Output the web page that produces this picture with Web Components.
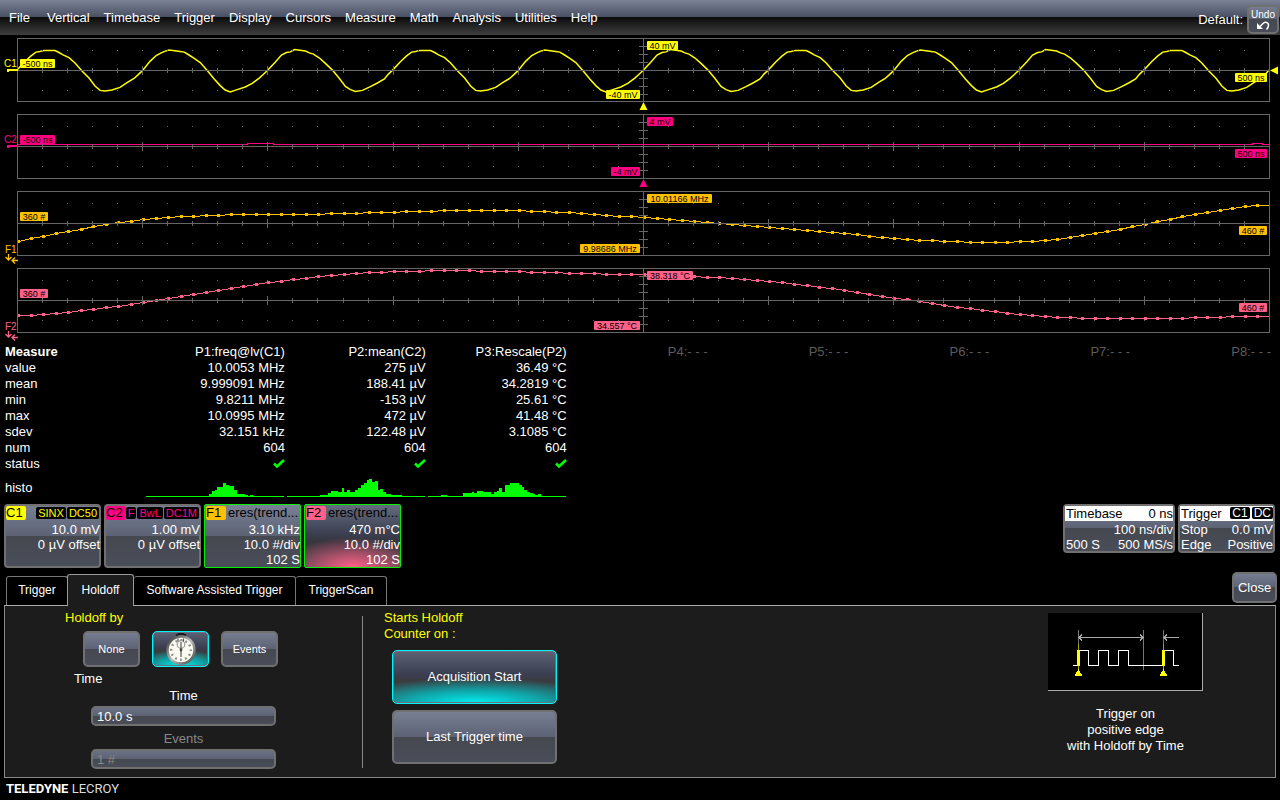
<!DOCTYPE html>
<html lang="en">
<head>
<meta charset="utf-8">
<title>Oscilloscope</title>
<style>
  html, body { margin: 0; background: #000; }
  body { font: 13px/16px "Liberation Sans", Arial, sans-serif; color: #fff; }
</style>
</head>
<body>
<scope-app></scope-app>

<template id="t-app">
  <style>
    :host { display: flex; flex-direction: column; min-height: 100vh; background: #000; }
    .plots { display: flex; flex-direction: column; gap: 12px; padding: 3px 0 11px; }
    .cards { display: flex; align-items: flex-start; gap: 3px; padding: 0 5px 0 4px; height: 64px; }
    .spacer { flex: 1; }
    scope-dialog { flex: 1; }
    footer { height: 22px; line-height: 22px; padding-left: 6px; font-family: Roboto, "Liberation Sans", sans-serif; font-size: 13px; color: #ddd; }
    footer b { color: #fff; }
  </style>
  <scope-menu></scope-menu>
  <main class="plots">
    <scope-trace source="C1"></scope-trace>
    <scope-trace source="C2"></scope-trace>
    <scope-trace source="F1"></scope-trace>
    <scope-trace source="F2"></scope-trace>
  </main>
  <measure-table></measure-table>
  <section class="cards">
    <channel-card name="C1" color="#ffff00" badges="SINX DC50"><span>10.0 mV</span><span>0 µV offset</span></channel-card>
    <channel-card name="C2" color="#ff0080" badges="F BwL DC1M"><span>1.00 mV</span><span>0 µV offset</span></channel-card>
    <channel-card name="F1" color="#ffc000" caption="eres(trend..." math><span>3.10 kHz</span><span>10.0 #/div</span><span>102 S</span></channel-card>
    <channel-card name="F2" color="#ff6088" caption="eres(trend..." math active><span>470 m°C</span><span>10.0 #/div</span><span>102 S</span></channel-card>
    <div class="spacer"></div>
    <status-card style="--w: 112px">
      <span slot="head">Timebase</span><span slot="head">0 ns</span>
      <span slot="one"></span><span slot="one">100 ns/div</span>
      <span slot="two">500 S</span><span slot="two">500 MS/s</span>
    </status-card>
    <status-card style="--w: 97px" badges="C1 DC">
      <span slot="head">Trigger</span>
      <span slot="one">Stop</span><span slot="one">0.0 mV</span>
      <span slot="two">Edge</span><span slot="two">Positive</span>
    </status-card>
  </section>
  <scope-tabs></scope-tabs>
  <scope-dialog></scope-dialog>
  <footer><b>TELEDYNE</b> LECROY</footer>
</template>

<template id="t-menu">
  <style>
    :host { display: flex; align-items: center; height: 35px; box-sizing: border-box;
      background: linear-gradient(#7c8296, #4a5064 17px, #0a0a0a 17px, #3c3c3c 34px); }
    nav { display: flex; flex: 1; gap: 14px; padding-left: 9px; }
    a { color: #fff; text-decoration: none; }
    a:first-child { margin-right: 3px; }
    .default { display: flex; align-items: center; gap: 4px; padding: 4px 1px 0 0; height: 29px; }
    soft-button { width: 32px; height: 29px; font-size: 10px; line-height: 10px; }
    svg { display: block; width: 14px; height: 9px; margin: 1px auto 0; }
  </style>
  <nav>
    <a href="#file">File</a><a href="#vertical">Vertical</a><a href="#timebase">Timebase</a><a href="#trigger">Trigger</a><a href="#display">Display</a><a href="#cursors">Cursors</a><a href="#measure">Measure</a><a href="#math">Math</a><a href="#analysis">Analysis</a><a href="#utilities">Utilities</a><a href="#help">Help</a>
  </nav>
  <div class="default"><span>Default:</span>
    <soft-button>Undo<svg viewBox="0 0 14 9"><path d="M1 2v6h6z" fill="#fff"/><path d="M3.500 6L7 2.500Q10 0 12 2.500Q13.500 5 10.500 8.500" fill="none" stroke="#fff" stroke-width="1.500"/></svg></soft-button>
  </div>
</template>

<template id="t-button">
  <style>
    :host { display: block; }
    button { display: flex; align-items: center; justify-content: center; width: 100%; height: 100%; box-sizing: border-box; margin: 0; padding: 0;
      font: inherit; color: #fff; border: 2px solid #707070; border-radius: 5px;
      background: linear-gradient(#7a8195, #5c6274 50%, #45484f 50%, #4a4e5a) border-box; }
    :host([selected]) button { border-width: 1px; border-color: #00f6f6;
      box-shadow: inset 0 0 0 1px #6b7184;
      background: radial-gradient(ellipse 85% 48% at 50% 100%, #00f0f0, #10a4a8 50%, transparent), linear-gradient(#5c6274, #3a3e50 45%, #3a3a3e 60%, #34464c); }
  </style>
  <button type="button"><span><slot></slot></span></button>
</template>

<template id="t-channel">
  <style>
    :host { display: block; position: relative; width: 97px; height: 64px; box-sizing: border-box; border: 2px solid #707070; border-radius: 4px; color: #fff;
      background: linear-gradient(#7a8195, #5c6274 50%, #45484f 50%, #4a4e5a) border-box; }
    :host([math]) { border: 1px solid #00f000; border-radius: 2px; padding: 1px; }
    :host([active]) { background: radial-gradient(ellipse 75% 48% at 50% 100%, #ff6088, transparent), linear-gradient(#656b7e, #3c4052 45%, #35353b 60%, #45424a); }
    header { display: flex; align-items: center; height: 14px; }
    .tag { flex: none; width: 20px; line-height: 14px; color: #000; border-radius: 2px; background: var(--c); }
    .badges { display: flex; flex: 1; justify-content: flex-end; gap: 1px; min-width: 0; }
    .badges span { background: #000; color: var(--c); font-size: 11px; line-height: 12px; border-radius: 2px; padding: 0 2px; }
    .caption { flex: 1; color: #000; padding-left: 2px; white-space: nowrap; }
    .rows { display: grid; grid-auto-rows: 15px; justify-items: end; line-height: 15px; padding-top: 2px; margin-right: -1px; }
  </style>
  <header><span class="tag"></span></header>
  <div class="rows"><slot></slot></div>
</template>

<template id="t-status">
  <style>
    :host { display: block; width: var(--w); height: 49px; box-sizing: border-box; border: 2px solid #707070; border-radius: 4px;
      background: linear-gradient(#7a8195, #5c6274 50%, #45484f 50%, #4a4e5a) border-box; }
    div { display: flex; justify-content: space-between; line-height: 15px; height: 15px; white-space: nowrap; padding-left: 1px; }
    .head { background: #fff; color: #000; }
    .one { padding-top: 1px; }
    b { font-weight: 400; display: flex; gap: 2px; }
    b i { font-style: normal; font-size: 12px; color: #fff; background: #000; border-radius: 2px; line-height: 12px; height: 12px; margin-top: 1px; padding: 0 2px; }
  </style>
  <div class="head"><slot name="head"></slot></div>
  <div class="one"><slot name="one"></slot></div>
  <div><slot name="two"></slot></div>
</template>

<template id="t-measure">
  <style>
    :host { display: block; height: 160px; }
    table { width: 100%; border-collapse: collapse; table-layout: fixed; }
    th, td { height: 16px; padding: 0 9px 0 0; text-align: right; font-weight: 400; white-space: nowrap; }
    th:first-child { text-align: left; padding: 0 0 0 5px; }
    thead th:first-child { font-weight: 700; }
    .idle { color: #5c5c5c; }
    .histo > * { height: 32px; }
    .histo td { vertical-align: top; }
    svg { display: block; margin-left: auto; }
    .histo svg { width: 138px; height: 25px; margin-left: -7px; }
    .check { width: 12px; height: 11px; }
  </style>
  <table>
    <colgroup><col style="width: 153px"></colgroup>
    <thead></thead><tbody></tbody>
  </table>
</template>

<template id="t-tabs">
  <style>
    :host { display: flex; align-items: flex-end; height: 37px; padding: 0 3px 0 6px; }
    button { font: inherit; font-size: 12px; color: #fff; background: #000; height: 29px; margin: 0; padding: 0 0 2px; border: 1px solid #777; border-left-width: 0; border-bottom: 0; border-radius: 3px 3px 0 0; }
    button:first-of-type { border-left-width: 1px; }
    .on { background: #1c1c1c; height: 32px; position: relative; margin-bottom: -1px; padding-bottom: 1px; border-left-width: 1px; border-color: #999; margin-left: -1px; }
    .spacer { flex: 1; }
    soft-button { width: 45px; height: 31px; margin-bottom: 2px; }
  </style>
  <button style="width: 62px">Trigger</button><button class="on" style="width: 67px">Holdoff</button><button style="width: 162px">Software Assisted Trigger</button><button style="width: 91px">TriggerScan</button>
  <div class="spacer"></div>
  <soft-button>Close</soft-button>
</template>

<template id="t-field">
  <style>
    :host { display: block; width: 185px; text-align: center; }
    label { display: block; margin-bottom: 2px; }
    input { display: block; width: 100%; height: 20px; box-sizing: border-box; margin: 0; padding: 0 0 0 4px; font: inherit; color: #fff;
      border: 2px solid #707070; border-radius: 5px; background: linear-gradient(#6e7588, #5c6274 50%, #45484f 50%, #4a4e5a) border-box; }
    :host([disabled]), :host([disabled]) input { color: #888; }
    :host([disabled]) input { -webkit-text-fill-color: #888; opacity: 1; }
  </style>
  <label for="f"></label><input id="f" type="text">
</template>

<template id="t-dialog">
  <style>
    :host { display: flex; margin: 0 4px 0 4px; background: #1c1c1c; border: 1px solid #888; border-top-color: #aaa; padding-left: 60px; box-sizing: border-box; }
    .by { width: 297px; padding-top: 4px; }
    .title { color: #ff0; }
    .choices { display: flex; gap: 12px; margin: 5px 0 4px 18px; }
    .choices soft-button { width: 57px; height: 36px; font-size: 11px; }
    .choices svg { display: block; width: 30px; height: 32px; }
    .chosen { margin-left: 9px; }
    value-field { margin: 1px 0 0 26px; }
    value-field + value-field { margin-top: 5px; }
    .rule { width: 1px; background: #888; margin: 10px 0 9px; }
    .starts { padding: 4px 0 0 21px; }
    .starts soft-button { width: 165px; height: 54px; margin: 8px 0 0 8px; }
    .starts soft-button + soft-button { margin-top: 6px; }
    .help { margin: 7px 72px 0 auto; text-align: center; }
    .help svg { display: block; width: 155px; height: 78px; background: #000; margin-bottom: 15px; border: solid #aaa; border-width: 0 1px 1px 0; box-sizing: border-box; }
  </style>
  <section class="by">
    <div class="title">Holdoff by</div>
    <div class="choices">
      <soft-button>None</soft-button>
      <soft-button selected>
        <svg viewBox="0 0 30 32" aria-label="Time">
          <defs><linearGradient id="rim" x2="1" y2="1"><stop offset="0" stop-color="#333"/><stop offset=".5" stop-color="#bbb"/><stop offset="1" stop-color="#444"/></linearGradient></defs>
          <path d="M10 2.500Q15 -1 20 2.500" fill="none" stroke="#16181c" stroke-width="2"/>
          <circle cx="15" cy="17" r="13.500" fill="#fbfaf0" stroke="url(#rim)" stroke-width="2.500"/>
          <circle cx="15" cy="17" r="9.800" fill="none" stroke="#8a8a86" stroke-width="2.400" stroke-dasharray="1.800 3.331" stroke-dashoffset="0.900"/>
          <circle cx="15" cy="11.500" r="3.800" fill="#fbfaf0" stroke="#999" stroke-width="1.200"/>
          <path d="M12 5.500v3M17.500 5.500v3M15 9v15" stroke="#555" stroke-width="1.200"/>
          <circle cx="15" cy="17" r="1.400" fill="#444"/>
        </svg>
      </soft-button>
      <soft-button>Events</soft-button>
    </div>
    <div class="chosen">Time</div>
    <value-field label="Time" value="10.0 s"></value-field>
    <value-field label="Events" value="1 #" disabled></value-field>
  </section>
  <div class="rule"></div>
  <section class="starts">
    <div class="title">Starts Holdoff<br>Counter on :</div>
    <soft-button selected>Acquisition Start</soft-button>
    <soft-button>Last Trigger time</soft-button>
  </section>
  <section class="help">
    <svg viewBox="0 0 154 77" shape-rendering="crispEdges" fill="none">
      <path d="M30.500 17v20M95.500 17v40M115.500 17v20" stroke="#777"/>
      <path d="M31 24.500h64M34 21.500l-3 3 3 3M92 21.500l3 3-3 3M116 24.500h15M119 21.500l-3 3 3 3" stroke="#aaa"/>
      <path d="M25 52.500h5.500v-15h10v15h10v-15h10v15h10v-15h10v15h35v-15h10v15h5.500" stroke="#fff"/>
      <path d="M30.500 31v26M115.500 31v26" stroke="#aa0"/>
      <path d="M29 37h3v16h-3zM114 37h3v16h-3zM30.500 56l4 7h-8zM115.500 56l4 7h-8z" fill="#ff0"/>
    </svg>
    Trigger on<br>positive edge<br>with Holdoff by Time
  </section>
</template>

<script>
const stamp = (el, id) => {
  const root = el.attachShadow({ mode: 'open' });
  root.append(document.getElementById(id).content.cloneNode(true));
  return root;
};
const plain = (name, id) => customElements.define(name, class extends HTMLElement {
  constructor() { super(); stamp(this, id); }
});

/* One period of the C1 waveform: [dx, dy] from its rising zero crossing. */
const CYCLE = [[0,0],[8,-9],[14,-15],[19,-18],[23,-19],[27,-20.5],[38,-19.5],[42,-18],[46,-16],[52,-12.5],[58,-7.5],[65,0],[72,8],[78,15.5],[83,19.5],[88,21],[95,19.5],[103,16.5],[110,12.5],[117,8],[121,4]];
/* Trend samples, in pixels above (-) or below (+) the centre line. */
const F1 = [18,15,13,10,8,6,3,1,-1,-2,-4,-5,-6,-7,-7,-8,-8,-9,-9,-9,-9,-9,-9,-9,-9,-10,-10,-10,-11,-11,-11,-12,-12,-12,-13,-13,-13,-13,-13,-13,-13,-12,-12,-11,-11,-10,-9,-8,-7,-7,
  -6,-5,-4,-3,-2,-1,0,1,2,3,4,5,6,7,8,9,10,11,13,14,15,16,17,17,18,18,19,19,19,19,18,18,17,16,14,12,10,8,6,3,1,-2,-4,-7,-9,-11,-13,-15,-17,-18];
const F2 = [15,15,14,13,12,10,9,7,6,4,2,0,-2,-4,-6,-8,-10,-12,-14,-16,-18,-19,-21,-22,-24,-25,-26,-27,-28,-28,-29,-29,-29,-30,-30,-30,-30,-29,-29,-29,-29,-28,-28,-28,-27,-27,-27,-26,-26,-26,
  -26,-26,-25,-25,-24,-23,-23,-22,-21,-20,-19,-18,-16,-15,-13,-12,-10,-8,-6,-4,-2,-1,1,3,5,7,8,10,11,13,14,15,16,17,17,18,18,18,18,18,18,18,18,18,17,17,17,16,16,16];
const TRACES = {
  C1: { color: '#ffff00', h: 64, left: '-500 ns', right: '500 ns', top: '40 mV', bottom: '-40 mV', lw: 35, rw: 32, tw: 31, bw: 34, cycle: true },
  C2: { color: '#ff0080', h: 65, left: '-500 ns', right: '500 ns', top: '4 mV', bottom: '-4 mV', lw: 35, rw: 32, tw: 26, bw: 29 },
  F1: { color: '#ffc000', h: 65, left: '360 #', right: '460 #', top: '10.01166 MHz', bottom: '9.98686 MHz', lw: 28, rw: 28, tw: 65, bw: 60, data: F1 },
  F2: { color: '#ff6088', h: 65, left: '360 #', right: '460 #', top: '38.318 °C', bottom: '34.557 °C', lw: 28, rw: 28, tw: 46, bw: 46, data: F2 }
};

customElements.define('scope-trace', class extends HTMLElement {
  constructor() {
    super();
    this.attachShadow({ mode: 'open' });
    this.draw = this.draw.bind(this);
  }
  connectedCallback() { this.draw(); addEventListener('resize', this.draw); }
  disconnectedCallback() { removeEventListener('resize', this.draw); }
  draw() {
    const name = this.getAttribute('source'), t = TRACES[name];
    const x0 = 17, x1 = document.documentElement.clientWidth - 11, w = x1 - x0, div = w / 10, mid = x0 + Math.round(w / 2), cy = 32;
    const px = v => Math.round(v) + .5;
    let grid = `M${x0}.5 .5H${x1}.5V${t.h - .5}H${x0}.5ZM${x0} ${cy}.5H${x1}M${mid}.5 0V${t.h}`;
    for (let i = 1; i < 50; i++) {
      const x = px(x0 + i * div / 5), r = i % 5 ? 2 : 4;
      grid += `M${x} ${cy - r}v${2 * r + 1}M${x - .5} 12.5h1M${x - .5} 52.5h1`;
    }
    for (let i = -3; i <= 3; i++) grid += `M${mid - 4} ${cy + i * 8}.5h9`;
    let wave = '', dots = '';
    if (t.cycle) {
      const pts = [];
      for (let c = -1; c < 10; c++) CYCLE.forEach(([dx, dy], i) => {
        const x = x0 + c * div + dx * div / 125.2;
        if (x >= x0 && x <= x1) pts.push(`${x.toFixed(1)} ${(cy + .5 + dy + ((i * 7 + c * 5) % 3 - 1) * .4).toFixed(1)}`);
      });
      wave = 'M' + pts.join('L') + `L${x1} ${cy}`;
    } else if (t.data) {
      t.data.forEach((v, i) => {
        const x = Math.round(x0 + 1 + i * div / 10), y = cy + v;
        wave += (i ? 'L' : 'M') + `${x + .5} ${y + .5}`;
        dots += `M${x - 1} ${y - 1}h3v3h-3z`;
      });
      wave += `H${x1}`;
    } else {
      const b = x0 + w * .184;
      wave = `M${x0} 30.5H${b}V29.5H${b + 26}V30.5H${x1 - 17}V29.5H${x1 - 7}V30.5H${x1}`;
    }
    const tag = (x, y, bw, s) => `<rect x="${x}" y="${y}" width="${bw}" height="9" rx="1" fill="${t.color}"/><text x="${x + bw / 2}" y="${y + 8}" text-anchor="middle" font-size="9" fill="#000">${s}</text>`;
    const math = name[0] === 'F';
    const gutter = math
      ? `<text x="5" y="62" font-size="10" fill="${t.color}">${name}</text><path d="M8.500 63v6M5.500 66l3 3 3-3M18 69.500h-6M15 66.500l-3 3 3 3" fill="none" stroke="${t.color}" stroke-width="1.300"/>`
      : `<text x="4" y="29" font-size="10" fill="${t.color}">${name}</text><path d="M7 31h11v2H9v1H7z" fill="${t.color}"/><path d="M${mid}.5 ${t.h}l4 8h-8z" fill="${t.color}"/>`;
    const level = name === 'C1' ? `<path d="M${x1 + 1} 32.500l8-4v8z" fill="${t.color}"/>` : '';
    this.shadowRoot.innerHTML = `
      <style>:host { display: block; height: ${t.h}px; } svg { display: block; width: 100%; height: ${t.h}px; overflow: visible; }</style>
      <svg role="img" aria-label="${name} trace">
        <path d="${wave}" fill="none" stroke="${t.color}" stroke-width="${t.cycle ? 1.5 : 1}" ${t.cycle ? '' : 'shape-rendering="crispEdges"'}/>
        <path d="${dots}" fill="${t.color}"/>
        <path d="${grid}" fill="none" stroke="#666" shape-rendering="crispEdges"/>
        ${gutter}${level}
        ${tag(20, 21, t.lw, t.left)}${tag(x1 - 2 - t.rw, 35, t.rw, t.right)}
        ${tag(mid + 4, 3, t.tw, t.top)}${tag(mid - 3 - t.bw, t.h - 12, t.bw, t.bottom)}
      </svg>`;
  }
});

/* Histogram bars: [x start, x end, height], in thirds of a pixel. */
const HISTO = [
  [[90,99,4],[148,190,4],[190,199,10],[199,207,17],[207,214,20],[214,231,31],[231,240,43],[240,248,37],[248,265,33],[265,273,20],[273,278,8],[278,296,10],[296,307,6],[307,312,4],[312,320,6]],
  [[73,89,4],[99,122,5],[122,131,11],[131,147,17],[147,154,19],[154,165,14],[165,172,28],[172,180,15],[180,189,22],[189,197,15],[197,205,14],[205,213,20],[213,222,27],[222,231,35],[231,239,42],[239,247,52],[247,255,55],[255,264,45],[264,273,49],[273,280,22],[280,288,25],[288,296,15],[296,312,8],[312,345,5]],
  [[40,56,5],[66,104,4],[104,114,13],[114,122,12],[122,131,11],[131,139,16],[139,148,13],[148,156,17],[156,165,19],[165,173,16],[173,182,15],[182,190,14],[190,198,10],[198,206,14],[206,214,17],[214,222,26],[222,231,16],[231,240,37],[240,247,35],[247,256,41],[256,273,43],[273,281,37],[281,289,29],[289,297,20],[297,306,16],[306,314,12],[314,322,8],[322,330,5],[330,339,8],[339,376,4]]
];
customElements.define('measure-table', class extends HTMLElement {
  constructor() {
    super();
    const root = stamp(this, 't-measure');
    const heads = ['P1:freq@lv(C1)', 'P2:mean(C2)', 'P3:Rescale(P2)'];
    const idle = [4, 5, 6, 7, 8];
    root.querySelector('thead').innerHTML = '<tr><th>Measure</th>' + heads.map(h => `<th>${h}</th>`).join('') + idle.map(n => `<th class="idle">P${n}:- - -</th>`).join('') + '</tr>';
    const rows = [
      ['value', '10.0053 MHz', '275 µV', '36.49 °C'],
      ['mean', '9.999091 MHz', '188.41 µV', '34.2819 °C'],
      ['min', '9.8211 MHz', '-153 µV', '25.61 °C'],
      ['max', '10.0995 MHz', '472 µV', '41.48 °C'],
      ['sdev', '32.151 kHz', '122.48 µV', '3.1085 °C'],
      ['num', '604', '604', '604']
    ];
    const check = '<svg class="check" viewBox="0 0 12 11" aria-label="ok"><path d="M1 4.500L4 7.500 11 1" fill="none" stroke="#00ff00" stroke-width="2.600"/></svg>';
    const line = (cls, cells) => `<tr class="${cls}"><th>${cells[0]}</th>${cells.slice(1).map(c => `<td>${c}</td>`).join('')}<td colspan="5"></td></tr>`;
    root.querySelector('tbody').innerHTML = rows.map(r => line('', r)).join('') + line('', ['status', check, check, check]) +
      line('histo', ['histo', ...HISTO.map(b => `<svg viewBox="0 1 138 25" shape-rendering="crispEdges"><path fill="#00ff00" d="M0 25h138v1H0z${b.map(([a, z, h]) => `M${Math.round(a / 3)} 26V${26 - Math.round(h / 3)}H${Math.round(z / 3)}V26z`).join('')}"/></svg>`)]);
  }
});

customElements.define('channel-card', class extends HTMLElement {
  connectedCallback() {
    if (this.shadowRoot) return;
    const root = stamp(this, 't-channel');
    this.style.setProperty('--c', this.getAttribute('color'));
    root.querySelector('.tag').textContent = this.getAttribute('name');
    const extra = document.createElement('div');
    if (this.hasAttribute('caption')) { extra.className = 'caption'; extra.textContent = this.getAttribute('caption'); }
    else { extra.className = 'badges'; extra.innerHTML = this.getAttribute('badges').split(' ').map(b => `<span>${b}</span>`).join(''); }
    root.querySelector('header').append(extra);
  }
});

customElements.define('status-card', class extends HTMLElement {
  connectedCallback() {
    if (this.shadowRoot) return;
    const root = stamp(this, 't-status');
    if (!this.hasAttribute('badges')) return;
    const b = document.createElement('b');
    b.innerHTML = this.getAttribute('badges').split(' ').map(s => `<i>${s}</i>`).join('');
    root.querySelector('.head').append(b);
  }
});

customElements.define('value-field', class extends HTMLElement {
  connectedCallback() {
    if (this.shadowRoot) return;
    const root = stamp(this, 't-field');
    root.querySelector('label').textContent = this.getAttribute('label');
    const input = root.querySelector('input');
    input.value = this.getAttribute('value');
    input.disabled = this.hasAttribute('disabled');
  }
});

plain('soft-button', 't-button');
plain('scope-menu', 't-menu');
plain('scope-tabs', 't-tabs');
plain('scope-dialog', 't-dialog');
plain('scope-app', 't-app');
</script>
</body>
</html>
